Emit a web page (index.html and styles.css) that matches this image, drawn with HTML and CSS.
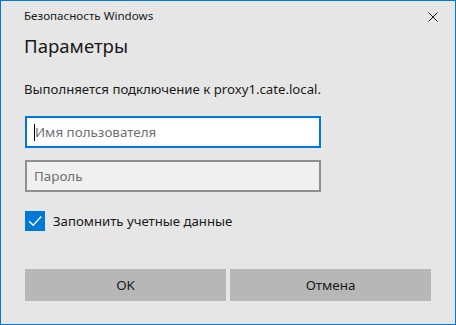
FILE: index.html
```html
<!DOCTYPE html>
<html lang="ru">
<head>
<meta charset="utf-8">
<title>Безопасность Windows</title>
<link rel="stylesheet" href="styles.css">
</head>
<body>
<div class="window">
  <div class="titlebar">
    <span class="title">Безопасность Windows</span>
    <span class="close" aria-label="Закрыть">
      <svg width="10" height="10" viewBox="0 0 10 10"><path d="M0.5 0.5 L9.5 9.5 M9.5 0.5 L0.5 9.5" stroke="#1a1a1a" stroke-width="1" fill="none"/></svg>
    </span>
  </div>
  <div class="content">
    <h1 class="heading">Параметры</h1>
    <p class="message">Выполняется подключение к proxy1.cate.local.</p>
    <div class="field field-active"><span class="caret"></span><span class="placeholder">Имя пользователя</span></div>
    <div class="field field-idle"><span class="placeholder">Пароль</span></div>
    <label class="remember">
      <span class="checkbox">
        <svg width="20" height="20" viewBox="0 0 20 20"><path d="M4.2 10.2 L8.2 14.2 L16.2 5.6" stroke="#ffffff" stroke-width="1.4" fill="none"/></svg>
      </span>
      <span class="remember-text">Запомнить учетные данные</span>
    </label>
    <div class="buttons">
      <div class="btn">OK</div>
      <div class="btn">Отмена</div>
    </div>
  </div>
</div>
</body>
</html>
```

FILE: styles.css
```css
* { box-sizing: border-box; }
html, body { margin: 0; padding: 0; }
body {
  font-family: "Noto Sans", "Open Sans", sans-serif;
  color: #1a1a1a;
  background: #e6e6e6;
}
.window {
  width: 456px;
  height: 325px;
  border: 1px solid #0078d7;
  background: #e6e6e6;
}
.titlebar {
  display: flex;
  justify-content: space-between;
  align-items: flex-start;
  padding: 7px 17px 0 23px;
  height: 30px;
}
.title {
  font-size: 11.6px;
  line-height: 16px;
}
.close {
  display: block;
  width: 10px;
  height: 10px;
  margin-top: 4px;
}
.close svg { display: block; }
.content {
  padding: 0 24px 0 24px;
}
.heading {
  margin: 2px 0 0 -1px;
  font-weight: 400;
  font-size: 18.6px;
  line-height: 26px;
}
.message {
  margin: 20px 0 0 -1px;
  font-size: 13.2px;
  line-height: 20px;
}
.field {
  width: 296px;
  height: 32px;
  border: 2px solid #0078d7;
  background: #ffffff;
  display: flex;
  align-items: center;
  padding-left: 7px;
  font-size: 13.4px;
}
.field-active { margin-top: 17px; }
.field-idle {
  margin-top: 12px;
  border-color: #8f8f8f;
  background: #f0f0f0;
}
.placeholder { color: #6f6f6f; }
.caret {
  display: block;
  width: 1px;
  height: 17px;
  background: #000;
}
.remember {
  display: flex;
  align-items: center;
  margin-top: 19px;
  gap: 8px;
  font-size: 13.2px;
}
.checkbox {
  width: 20px;
  height: 20px;
  background: #0078d7;
  display: block;
}
.checkbox svg { display: block; }
.buttons {
  display: flex;
  gap: 4px;
  margin-top: 38px;
}
.btn {
  flex: 1;
  height: 32px;
  background: #b7b7b7;
  display: flex;
  align-items: center;
  justify-content: center;
  font-size: 13.4px;
}
```
